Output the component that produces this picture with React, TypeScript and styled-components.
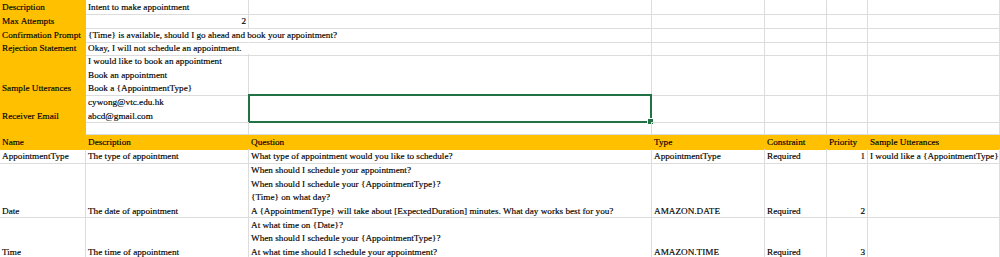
import styled, { createGlobalStyle } from "styled-components";

const GlobalStyle = createGlobalStyle`
  html, body {
    margin: 0;
    padding: 0;
    background: #ffffff;
    overflow: hidden;
  }
`;

const ORANGE = "#ffc000";
const GRID = "#dcdcdc";

type Line = string | string[];

interface CellData {
  text?: Line;
  right?: boolean;
  spill?: boolean;
  selected?: boolean;
}

interface RowData {
  h: number;
  header?: boolean;
  cells: CellData[];
}

const top: RowData[] = [
  { h: 14, cells: [{ text: "Description" }, { text: "Intent to make appointment" }] },
  { h: 14, cells: [{ text: "Max Attempts" }, { text: "2", right: true }] },
  {
    h: 13,
    cells: [
      { text: "Confirmation Prompt" },
      { text: "{Time} is available, should I go ahead and book your appointment?", spill: true },
    ],
  },
  {
    h: 13,
    cells: [
      { text: "Rejection Statement" },
      { text: "Okay, I will not schedule an appointment.", spill: true },
    ],
  },
  {
    h: 41,
    cells: [
      { text: "Sample Utterances" },
      {
        text: [
          "I would like to book an appointment",
          "Book an appointment",
          "Book a {AppointmentType}",
        ],
      },
    ],
  },
  {
    h: 27,
    cells: [
      { text: "Receiver Email" },
      { text: ["cywong@vtc.edu.hk", "abcd@gmail.com"] },
      { selected: true },
    ],
  },
  { h: 13, cells: [{}] },
];

const slots: RowData[] = [
  {
    h: 14,
    header: true,
    cells: [
      { text: "Name" },
      { text: "Description" },
      { text: "Question" },
      { text: "Type" },
      { text: "Constraint" },
      { text: "Priority" },
      { text: "Sample Utterances" },
    ],
  },
  {
    h: 14,
    cells: [
      { text: "AppointmentType" },
      { text: "The type of appointment" },
      { text: "What type of appointment would you like to schedule?" },
      { text: "AppointmentType" },
      { text: "Required" },
      { text: "1", right: true },
      { text: "I would like a {AppointmentType}" },
    ],
  },
  {
    h: 54,
    cells: [
      { text: "Date" },
      { text: "The date of appointment" },
      {
        text: [
          "When should I schedule your appointment?",
          "When should I schedule your {AppointmentType}?",
          "{Time} on what day?",
          "A {AppointmentType} will take about [ExpectedDuration] minutes. What day works best for you?",
        ],
      },
      { text: "AMAZON.DATE" },
      { text: "Required" },
      { text: "2", right: true },
      {},
    ],
  },
  {
    h: 42,
    cells: [
      { text: "Time" },
      { text: "The time of appointment" },
      {
        text: [
          "At what time on {Date}?",
          "When should I schedule your {AppointmentType}?",
          "At what time should I schedule your appointment?",
        ],
      },
      { text: "AMAZON.TIME" },
      { text: "Required" },
      { text: "3", right: true },
      {},
    ],
  },
];

function App() {
  const renderText = (text?: Line) => {
    if (!text) return null;
    const lines = Array.isArray(text) ? text : [text];
    return lines.map((l, i) => <TextLine key={i}>{l}</TextLine>);
  };

  const renderRow = (row: RowData, idx: number, labelled: boolean) => {
    const cells: CellData[] = [];
    for (let i = 0; i < 7; i++) cells.push(row.cells[i] || {});
    return (
      <Row key={idx} $h={row.h}>
        {cells.map((c, i) => {
          const fill = row.header || (labelled && i === 0);
          return (
            <Cell
              key={i}
              $fill={fill}
              $right={!!c.right}
              $spill={!!c.spill}
            >
              {renderText(c.text)}
              {c.selected && <Selection />}
            </Cell>
          );
        })}
      </Row>
    );
  };

  return (
    <>
      <GlobalStyle />
      <Sheet>
        {top.map((r, i) => renderRow(r, i, true))}
        {slots.map((r, i) => renderRow(r, i + 100, false))}
      </Sheet>
    </>
  );
}

export default App;

const Sheet = styled.div`
  width: 1000px;
  height: 257px;
  overflow: hidden;
  font-family: "Liberation Serif", "Times New Roman", serif;
  font-size: 9.2px;
  color: #000;
  -webkit-text-stroke: 0.15px #000;
`;

const Row = styled.div<{ $h: number }>`
  display: grid;
  grid-template-columns: 86px 163px 403px 113px 62px 41px 1fr;
  height: ${(p) => p.$h}px;
`;

const Cell = styled.div<{ $fill: boolean; $right: boolean; $spill: boolean }>`
  position: relative;
  box-sizing: border-box;
  display: flex;
  flex-direction: column;
  justify-content: flex-end;
  align-items: ${(p) => (p.$right ? "flex-end" : "flex-start")};
  padding: 0 2px 0 2px;
  white-space: nowrap;
  overflow: visible;
  min-width: 0;
  background: ${(p) => (p.$fill ? ORANGE : "transparent")};
  border-right: 1px solid
    ${(p) => (p.$fill ? ORANGE : p.$spill ? "transparent" : GRID)};
  border-bottom: 1px solid ${(p) => (p.$fill ? ORANGE : GRID)};
`;

const TextLine = styled.div`
  position: relative;
  top: 1px;
  line-height: 13.5px;
  height: 13.5px;
`;

const Selection = styled.div`
  position: absolute;
  left: -1px;
  top: -1px;
  right: -1px;
  bottom: -1px;
  border: 2px solid #217346;

  &::after {
    content: "";
    position: absolute;
    right: -4px;
    bottom: -4px;
    width: 5px;
    height: 5px;
    background: #217346;
    border: 1px solid #ffffff;
  }
`;
